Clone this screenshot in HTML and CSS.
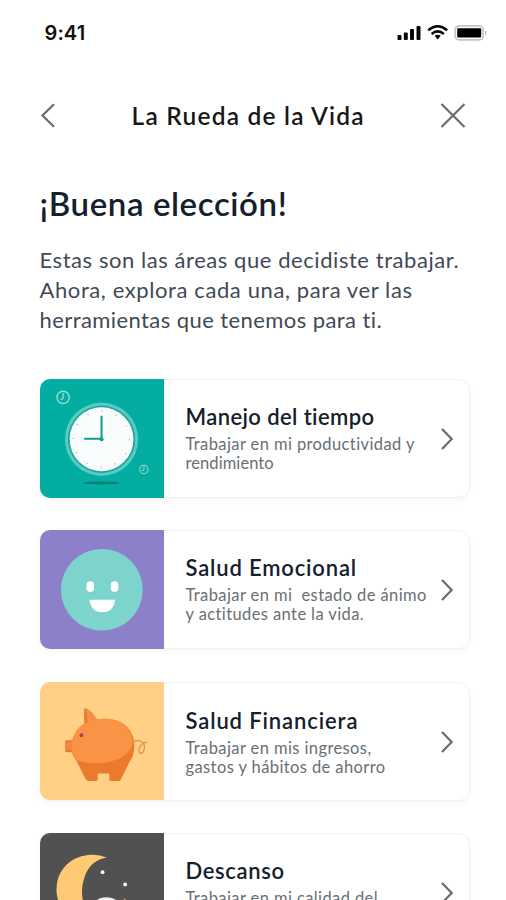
FILE: index.html
```html
<!DOCTYPE html>
<html lang="es">
<head>
<meta charset="utf-8">
<title>La Rueda de la Vida</title>
<link rel="stylesheet" href="styles.css">
</head>
<body>
<div class="screen">
  <header class="status">
    <span class="time">9:41</span>
    <svg class="status-icons" width="92" height="20" viewBox="0 0 92 20">
      <g fill="#080808"><rect x="0.5" y="12" width="4" height="5" rx="1"/><rect x="6.8" y="9.5" width="4" height="7.5" rx="1"/><rect x="13" y="6" width="4" height="11" rx="1"/><rect x="19.5" y="3" width="4" height="14" rx="1"/>
      <path d="M37.6 12.8q3.1-2 6.2 0l-3.1 3.8z"/></g>
      <g fill="none" stroke="#080808" stroke-width="2.5"><path d="M31.2 7.2Q40.7-.8 50.2 7.2"/><path d="M34.6 11Q40.7 5.8 46.8 11"/></g>
      <rect x="58.2" y="2.9" width="28" height="14" rx="4" fill="none" stroke="#c4c4c4" stroke-width="1.7"/>
      <rect x="60.2" y="5.2" width="24" height="9.4" rx="1" fill="#000"/>
      <path d="M88.2 7.5q2.5 2.5 0 5z" fill="#aaa"/>
    </svg>
  </header>
  <nav class="nav">
    <svg width="16" height="26" viewBox="0 0 16 26" class="line-icon"><path d="M15 1.2 3.5 12.5 15 23.8"/></svg>
    <h1 class="nav-title">La Rueda de la Vida</h1>
    <svg width="26" height="26" viewBox="0 0 26 26" class="line-icon"><path d="M1.5 1 24.5 24M24.5 1 1.5 24"/></svg>
  </nav>
  <main>
    <h2 class="heading">¡Buena elección!</h2>
    <p class="intro"><span class="intro-a">Estas son las áreas que decidiste trabajar.</span><br><span class="intro-b">Ahora, explora cada una, para ver las</span><br><span class="intro-c">herramientas que tenemos para ti.</span></p>
    <section class="cards">
      <article class="card">
        <svg class="art teal" viewBox="0 0 124 118">
          <ellipse cx="61" cy="103.5" rx="18" ry="1.5" fill="#087f79"/>
          <circle cx="61.3" cy="60" r="36.5" fill="#5bcac0"/><circle cx="61.3" cy="60" r="33.5" fill="#18a99f"/><circle cx="61.3" cy="60" r="31.8" fill="#f9fcfd"/>
          <circle cx="61.3" cy="60" r="28" fill="none" stroke="#96aaa9" stroke-width="1.2" stroke-dasharray="1 13.66"/>
          <path d="M61.3 36.5V60M44 59.5H61.3" fill="none" stroke="#139a8e" stroke-width="2"/><circle cx="61.3" cy="60" r="2" fill="#139a8e"/>
          <g fill="none" stroke="#91ded3"><circle cx="23" cy="18.3" r="6.1" stroke-width="1.4"/><path d="M23 14v5l-2.4 2" stroke-width="1.3"/><circle cx="103.5" cy="90" r="4.1"/><path d="M103.5 87v3.3l-2 1.2"/></g>
        </svg>
        <div class="copy"><h3 class="t-a">Manejo del tiempo</h3><p><span class="a1">Trabajar en mi productividad y</span><br><span class="a2">rendimiento</span></p></div>
        <svg class="chevron line-icon" width="14" height="24" viewBox="0 0 14 24"><path d="M2 2 11.7 12 2 22"/></svg>
      </article>
      <article class="card">
        <svg class="art purple" viewBox="0 0 124 118">
          <circle cx="61.6" cy="59.5" r="40.7" fill="#7cd4cc"/>
          <g fill="#fff"><rect x="46.3" y="51" width="7.5" height="10.5" rx="3.6"/><rect x="70.5" y="51" width="7.5" height="10.5" rx="3.6"/><path d="M49.3 69.5H74.8Q73.5 81.8 62 82 50.8 81.8 49.3 69.5"/></g>
        </svg>
        <div class="copy"><h3 class="t-b">Salud Emocional</h3><p><span class="b1">Trabajar en mi&nbsp; estado de ánimo</span><br><span class="b2">y actitudes ante la vida.</span></p></div>
        <svg class="chevron line-icon" width="14" height="24" viewBox="0 0 14 24"><path d="M2 2 11.7 12 2 22"/></svg>
      </article>
      <article class="card">
        <svg class="art yellow" viewBox="0 0 124 118">
          <path d="M44 45V26q6 1 13 12z" fill="#e9782f"/><path d="M46 26q6 3 11 12l-9 6z" fill="#f69045"/>
          <path d="M32 58H26.5q-1.5 0-1.5 2v8q0 2 1.5 2H33z" fill="#e9782f"/>
          <path d="M32 58Q38 37 63 36.5C83 36 94 48 94 63Q94 73 89 80L80.5 97Q80 98.5 78 98.5H70.5Q69 98.5 69 96.5V91H57.5V96.5Q57.5 98.5 55.5 98.5H48Q46.5 98.5 45.5 96.5L36 78Q29 69 32 58" fill="#eb7a2d"/>
          <path d="M32 58Q38 37 63 36.5C83 36 92 48 92.5 61 88 80 56 85 37 78Q30 70 32 58" fill="#f99446"/>
          <path d="M25 60h7v8h-7z" fill="#f18a40"/><circle cx="41.3" cy="53" r="1.9" fill="#a04465"/>
          <path d="M93.5 59.5C99 56.5 104 60 104 65c0 4-2 6.5-4 6C96.5 70 99 60 107 60" fill="none" stroke="#e58b40" stroke-width="1.2"/>
        </svg>
        <div class="copy low"><h3 class="t-c">Salud Financiera</h3><p><span class="c1">Trabajar en mis ingresos,</span><br><span class="c2">gastos y hábitos de ahorro</span></p></div>
        <svg class="chevron line-icon" width="14" height="24" viewBox="0 0 14 24"><path d="M2 2 11.7 12 2 22"/></svg>
      </article>
      <article class="card">
        <svg class="art dark" viewBox="0 0 124 118">
          <path d="M66.5 24.5C49 17 24 24 17.5 47 11 76 36 96 60 87 42 80 39 61 44 45 48 31 58 26 66.5 24.5" fill="#ffca73"/>
          <circle cx="62.3" cy="39" r="1.9" fill="#fff"/><circle cx="84.8" cy="51.2" r="1.9" fill="#fff"/>
          <path d="M55 69q3-5 11-5t12 5l3 12H50z" fill="#eee"/><path d="M81 69l4-4v4z" fill="#ffca73"/>
        </svg>
        <div class="copy last"><h3 class="t-d">Descanso</h3><p><span class="d1">Trabajar en mi calidad del</span></p></div>
        <svg class="chevron line-icon" width="14" height="24" viewBox="0 0 14 24"><path d="M2 2 11.7 12 2 22"/></svg>
      </article>
    </section>
  </main>
</div>
</body>
</html>
```

FILE: styles.css
```css
* { box-sizing: border-box; }
body { margin: 0; background: #fff; font-family: Lato, "Liberation Sans", sans-serif; color: #14202c; }
h1, h2, h3, p { margin: 0; }
svg { display: block; flex: none; }
.screen { height: 900px; overflow: hidden; padding: 22px 37px 0 39.5px; }
.status { height: 22px; display: flex; justify-content: space-between; align-items: center; padding-left: 5px; margin-right: -20px; }
.time { font: 600 20px/22px Inter, sans-serif; color: #111; letter-spacing: .1px; }
.nav { height: 30px; margin-top: 57px; display: flex; align-items: center; justify-content: space-between; padding-right: 3px; margin-left: -1px; }
.nav-title { font-size: 24.5px; line-height: 30px; font-weight: 600; color: #181818; letter-spacing: 1.2px; white-space: nowrap; padding-left: 2px; }
.line-icon { fill: none; stroke: #6b6b6b; stroke-width: 2.2; }
.heading { margin-top: 50px; font-size: 33px; line-height: 44px; font-weight: 600; letter-spacing: .6px; }
.intro { margin-top: 20px; font-size: 22px; line-height: 30px; color: #3f4a55; white-space: nowrap; }
.intro-a { letter-spacing: .56px; }
.intro-b { letter-spacing: .6px; }
.intro-c { letter-spacing: .42px; }
.cards { margin-top: 44px; display: grid; gap: 32.3px; }
.card { width: 430px; height: 119px; display: flex; align-items: flex-start; border: 1.5px solid #f0f1f2; border-radius: 11px; box-shadow: 0 3px 7px #00000009; background: #fff; }
.art { width: 124.5px; height: 118.5px; margin: -1px 0 -1px -1px; border-radius: 10px 0 0 10px; }
.teal { background: #04ada1; }
.purple { background: #8c80ca; }
.yellow { background: #ffd085; }
.dark { background: #515151; }
.copy { flex: 1; padding: 22.7px 0 0 21.5px; white-space: nowrap; }
.copy.low { padding-top: 24px; }
.copy.last { padding-top: 23.5px; }
.copy h3 { font-size: 22px; line-height: 28px; font-weight: 600; letter-spacing: .4px; }
.copy .t-b { letter-spacing: .83px; }
.copy .t-c { letter-spacing: .88px; }
.copy .t-d { letter-spacing: .65px; }
.copy p { margin-top: 4.5px; font-size: 16.5px; line-height: 19px; color: #6a6f74; letter-spacing: .4px; }
.copy.last p { margin-top: 3.5px; }
.copy .a2 { letter-spacing: .08px; }
.chevron { margin: 47px 15px 0 0; }
```
